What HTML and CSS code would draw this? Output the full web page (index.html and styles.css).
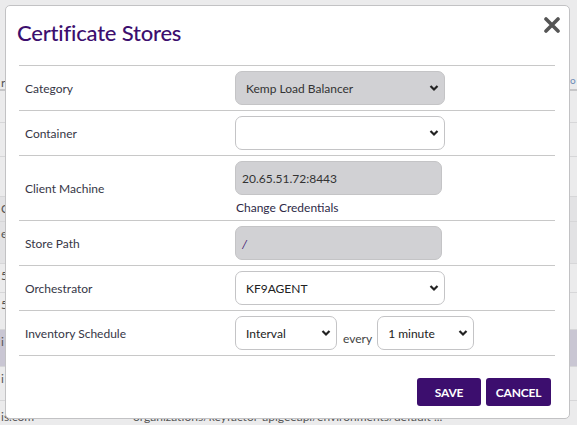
FILE: index.html
```html
<!DOCTYPE html>
<html>
<head>
<meta charset="utf-8">
<link rel="stylesheet" href="styles.css">
</head>
<body>
<div class="page">
  <div class="bg-row r1"><span class="l">r</span><span class="r">o</span></div>
  <div class="bg-row r2"></div>
  <div class="bg-row r3"></div>
  <div class="bg-row r4"></div>
  <div class="bg-row r5 shade"><span class="l">C</span></div>
  <div class="bg-row r6 shade"><span class="l">e</span></div>
  <div class="bg-row r7"><span class="l">5</span></div>
  <div class="bg-row r8"><span class="l">5</span></div>
  <div class="bg-row r9 sel"><span class="l">i</span></div>
  <div class="bg-row r10"><span class="l">i</span></div>
  <div class="bg-row r11"><span class="l">is.com</span><span class="m">organizations/keyfactor-apigeeapi/environments/default ...</span></div>
</div>

<div class="modal">
  <div class="modal-head">
    <h1 class="title">Certificate Stores</h1>
    <svg class="close" width="16" height="16" viewBox="0 0 16 16"><path d="M2 2 L14 14 M14 2 L2 14" stroke="#555" stroke-width="3.6" stroke-linecap="round"/></svg>
  </div>
  <div class="form">
    <div class="row">
      <div class="label">Category</div>
      <div class="field"><div class="select disabled"><span>Kemp Load Balancer</span><svg class="chev" width="10" height="8" viewBox="0 0 10 8"><path d="M1.5 2 L5 5.5 L8.5 2" fill="none" stroke="#222" stroke-width="2.2"/></svg></div></div>
    </div>
    <div class="row">
      <div class="label">Container</div>
      <div class="field"><div class="select"><span></span><svg class="chev" width="10" height="8" viewBox="0 0 10 8"><path d="M1.5 2 L5 5.5 L8.5 2" fill="none" stroke="#222" stroke-width="2.2"/></svg></div></div>
    </div>
    <div class="row tall">
      <div class="label">Client Machine</div>
      <div class="field col"><div class="input disabled">20.65.51.72:8443</div><div class="link">Change Credentials</div></div>
    </div>
    <div class="row">
      <div class="label">Store Path</div>
      <div class="field"><div class="input disabled path">/</div></div>
    </div>
    <div class="row">
      <div class="label">Orchestrator</div>
      <div class="field"><div class="select"><span>KF9AGENT</span><svg class="chev" width="10" height="8" viewBox="0 0 10 8"><path d="M1.5 2 L5 5.5 L8.5 2" fill="none" stroke="#222" stroke-width="2.2"/></svg></div></div>
    </div>
    <div class="row">
      <div class="label">Inventory Schedule</div>
      <div class="field sched">
        <div class="select small"><span>Interval</span><svg class="chev" width="10" height="8" viewBox="0 0 10 8"><path d="M1.5 2 L5 5.5 L8.5 2" fill="none" stroke="#222" stroke-width="2.2"/></svg></div>
        <span class="every">every</span>
        <div class="select small2"><span>1 minute</span><svg class="chev" width="10" height="8" viewBox="0 0 10 8"><path d="M1.5 2 L5 5.5 L8.5 2" fill="none" stroke="#222" stroke-width="2.2"/></svg></div>
      </div>
    </div>
  </div>
  <div class="actions">
    <button class="btn">SAVE</button>
    <button class="btn">CANCEL</button>
  </div>
</div>
</body>
</html>
```

FILE: styles.css
```css
html, body {
  margin: 0;
  padding: 0;
}
body {
  width: 577px;
  height: 425px;
  overflow: hidden;
  background: #ebebec;
  font-family: Lato, "Open Sans", sans-serif;
  position: relative;
}
.page {
  position: absolute;
  inset: 0;
}
.bg-row {
  position: absolute;
  left: 0;
  right: 0;
  border-bottom: 1px solid #d6d6d8;
  font-size: 12px;
  color: #555;
}
.bg-row .l { position: absolute; left: 1px; top: 4px; }
.bg-row .r { position: absolute; left: 570px; top: 4px; color: #6a8ab5; font-size: 10px; }
.bg-row .m { position: absolute; left: 133px; top: 4px; color: #555; }
.r1 { top: 84px; height: 5px; border-bottom: 2px solid #c6c6c8; }
.r1 .l { top: -9px; }
.r1 .r { top: -10px; }
.r2 { top: 89px; height: 33px; }
.r3 { top: 123px; height: 33px; }
.r4 { top: 157px; height: 39px; }
.r5 { top: 197px; height: 24px; }
.r6 { top: 222px; height: 41px; }
.shade { background: #e2e2e4; }
.r7 { top: 264px; height: 28px; }
.r8 { top: 293px; height: 36px; }
.r9 { top: 330px; height: 36px; background: #c9c6d3; }
.r10 { top: 367px; height: 33px; }
.r11 { top: 401px; height: 24px; border-bottom: none; }
.r11 .l { top: 8px; }
.r11 .m { top: 8px; }

.modal {
  position: absolute;
  left: 5px;
  top: 5px;
  width: 563px;
  height: 412px;
  background: #fff;
  border: 1px solid #c2c2c4;
  border-radius: 5px;
  box-sizing: content-box;
  display: flex;
  flex-direction: column;
}
.modal-head {
  height: 59px;
  display: flex;
  justify-content: space-between;
  align-items: flex-start;
}
.title {
  margin: 14px 0 0 11px;
  font-size: 22px;
  font-weight: 500;
  color: #3c0e6e;
  line-height: 26px;
  letter-spacing: -0.2px;
}
.close {
  margin: 11px 9px 0 0;
}
.form {
  margin: 0 14px 0 13px;
  border-top: 1px solid #c8c8c8;
}
.row {
  display: flex;
  height: 44px;
  border-bottom: 1px solid #c8c8c8;
}
.row.tall {
  height: 64px;
}
.label {
  width: 210px;
  padding-left: 6px;
  display: flex;
  align-items: center;
  font-size: 12px;
  color: #363646;
}
.field {
  display: flex;
  align-items: center;
}
.field.col {
  flex-direction: column;
  align-items: flex-start;
  justify-content: flex-start;
  padding-top: 5px;
}
.select {
  box-sizing: border-box;
  width: 210px;
  height: 34px;
  border: 1px solid #c4c4c6;
  border-radius: 7px;
  background: #fff;
  display: flex;
  align-items: center;
  justify-content: space-between;
  padding: 0 5px 0 10px;
  font-size: 12px;
  color: #222;
}
.select.disabled {
  background: #d1d1d4;
  color: #333;
}
.input {
  box-sizing: border-box;
  width: 207px;
  height: 34px;
  border: 1px solid #c4c4c6;
  border-radius: 7px;
  display: flex;
  align-items: center;
  padding-left: 6px;
  font-size: 12px;
  color: #333;
}
.input.disabled {
  background: #d1d1d4;
}
.input.path {
  font-style: italic;
  color: #3c0e6e;
}
.link {
  margin-top: 5px;
  font-size: 12px;
  color: #2e2a48;
  padding-left: 1px;
}
.select.small {
  width: 102px;
}
.select.small2 {
  width: 97px;
}
.every {
  font-size: 12px;
  color: #444;
  margin: 10px 5px 0 6px;
}
.actions {
  display: flex;
  justify-content: flex-end;
  gap: 5px;
  margin: 22px 18px 0 0;
}
.btn {
  height: 28px;
  padding: 0;
  border: none;
  border-radius: 3px;
  background: #3c0e6e;
  color: #fff;
  font-family: Lato, "Open Sans", sans-serif;
  font-weight: 700;
  font-size: 12px;
  letter-spacing: -0.2px;
}
.btn:first-child { width: 64px; }
.btn:last-child { width: 65px; }
```
